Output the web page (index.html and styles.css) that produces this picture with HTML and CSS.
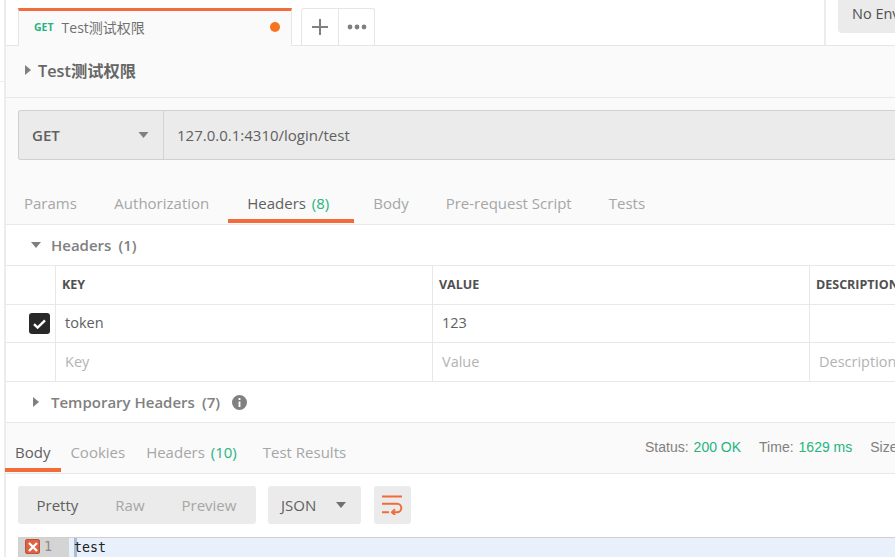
FILE: index.html
```html
<!DOCTYPE html>
<html lang="en">
<head>
    <meta charset="UTF-8">
    <meta name="viewport" content="width=device-width, initial-scale=1.0">
    <title>Test测试权限</title>
    <link rel="stylesheet" href="styles.css">
</head>
<body>
    <div class="sidebar-edge">
        <div class="edge-top"></div>
    </div>
    <div class="main">
        <div class="tab-bar">
            <div class="req-tab">
                <span class="req-tab-method">GET</span>
                <span class="req-tab-name">Test测试权限</span>
                <span class="dot"></span>
            </div>
            <div class="tab-actions">
                <div class="tab-action plus">
                    <svg viewBox="0 0 16 16" width="16" height="16"><path d="M7 0h2v7h7v2H9v7H7V9H0V7h7z"/></svg>
                </div>
                <div class="tab-action more">
                    <svg viewBox="0 0 20 6" width="20" height="6"><circle cx="3" cy="3" r="2.4"/><circle cx="10" cy="3" r="2.4"/><circle cx="17" cy="3" r="2.4"/></svg>
                </div>
            </div>
            <div class="env">
                <div class="env-select">No Environment</div>
            </div>
        </div>

        <div class="name-row">
            <svg class="caret" viewBox="0 0 6 10" width="6" height="10"><path d="M0 0l6 5-6 5z"/></svg>
            <span>Test测试权限</span>
        </div>

        <div class="url-row">
            <div class="url-box">
                <div class="method">
                    <span>GET</span>
                    <svg viewBox="0 0 10 6" width="11" height="6"><path d="M0 0h10L5 6z"/></svg>
                </div>
                <div class="url">127.0.0.1:4310/login/test</div>
            </div>
        </div>

        <div class="req-tabs">
            <div class="tab">Params</div>
            <div class="tab">Authorization</div>
            <div class="tab active">Headers <span class="count">(8)</span></div>
            <div class="tab">Body</div>
            <div class="tab">Pre-request Script</div>
            <div class="tab">Tests</div>
        </div>

        <div class="section-head open">
            <svg viewBox="0 0 10 6" width="10" height="6"><path d="M0 0h10L5 6z"/></svg>
            <span>Headers</span><span class="section-count">(1)</span>
        </div>

        <div class="kv-row kv-head">
            <div class="cell"></div>
            <div class="cell">KEY</div>
            <div class="cell">VALUE</div>
            <div class="cell">DESCRIPTION</div>
        </div>
        <div class="kv-row token-row">
            <div class="cell check-cell">
                <span class="check">
                    <svg viewBox="0 0 13 10" width="13" height="10"><path d="M1 5.2l3.6 3.4L12 1.4" fill="none" stroke="#fff" stroke-width="2.4"/></svg>
                </span>
            </div>
            <div class="cell val">token</div>
            <div class="cell val">123</div>
            <div class="cell val"></div>
        </div>
        <div class="kv-row">
            <div class="cell"></div>
            <div class="cell val hint">Key</div>
            <div class="cell val hint">Value</div>
            <div class="cell val hint">Description</div>
        </div>

        <div class="section-head temp">
            <svg viewBox="0 0 6 10" width="6" height="10"><path d="M0 0l6 5-6 5z"/></svg>
            <span>Temporary Headers</span><span class="section-count">(7)</span>
            <svg class="info" viewBox="0 0 16 16" width="15" height="15"><path fill-rule="evenodd" d="M8 0a8 8 0 1 1 0 16A8 8 0 0 1 8 0zM7 3.2v2.2h2V3.2zM7 7v5.8h2V7z"/></svg>
        </div>

        <div class="res-bar">
            <div class="tab active">Body</div>
            <div class="tab">Cookies</div>
            <div class="tab">Headers <span class="count">(10)</span></div>
            <div class="tab">Test Results</div>
            <div class="status">
                <span>Status:</span><span class="ok">200 OK</span>
                <span class="stat-next">Time:</span><span class="ok">1629 ms</span>
                <span class="stat-next">Size:</span>
            </div>
        </div>

        <div class="res-tools">
            <div class="btn-group">
                <span class="on">Pretty</span>
                <span>Raw</span>
                <span>Preview</span>
            </div>
            <div class="lang">
                <span>JSON</span>
                <svg viewBox="0 0 10 6" width="10" height="6"><path d="M0 0h10L5 6z"/></svg>
            </div>
            <div class="wrap">
                <svg viewBox="0 0 21 20" width="21" height="20" fill="none" stroke="#f26b3a" stroke-width="2">
                    <path d="M0 1.5h20M0 8.7h15a4.3 4.3 0 0 1 0 8.6h-5M0 17.3h7"/>
                    <path d="M13 14.3l-3 3 3 2.7"/>
                </svg>
            </div>
        </div>

        <div class="editor">
            <div class="gutter">
                <span class="err">
                    <svg viewBox="0 0 10 10" width="10" height="10"><path d="M1 1l8 8M9 1l-8 8" stroke="#fff" stroke-width="2.4"/></svg>
                </span>
                <span class="line-no">1</span>
            </div>
            <div class="code"><span class="cursor"></span>test</div>
        </div>
    </div>
</body>
</html>
```

FILE: styles.css
```css
* {
    box-sizing: border-box;
}
html, body {
    margin: 0;
    height: 557px;
    overflow: hidden;
}
body {
    display: flex;
    width: 895px;
    background-color: #fff;
    font-family: "Open Sans", "Noto Sans CJK SC", sans-serif;
    font-size: 14.5px;
    color: #505050;
}
.sidebar-edge {
    width: 6px;
    flex: none;
    background-color: #fff;
    border-right: 2px solid #ececec;
}
.edge-top {
    height: 82px;
    border-bottom: 1px solid #ececec;
}
.main {
    flex: 1;
    min-width: 0;
    display: flex;
    flex-direction: column;
}

/* top tabs */
.tab-bar {
    height: 46px;
    flex: none;
    display: flex;
    padding-top: 8px;
    padding-left: 12px;
    border-bottom: 1px solid #e6e6e6;
}
.req-tab {
    width: 274px;
    height: 38px;
    margin-bottom: -1px;
    display: flex;
    align-items: center;
    padding: 0 11px 4px 15px;
    background-color: #fafafa;
    border-top: 3px solid #f26b3a;
    border-left: 1px solid #e6e6e6;
    border-right: 1px solid #e6e6e6;
}
.req-tab-method {
    font-size: 10.5px;
    font-weight: 700;
    color: #26b47f;
    margin-right: 8px;
}
.req-tab-name {
    font-size: 14px;
    color: #707070;
    flex: 1;
}
.dot {
    width: 10px;
    height: 10px;
    border-radius: 50%;
    background-color: #f7731e;
}
.tab-actions {
    display: flex;
    margin-left: 9px;
    height: 37px;
    border: 1px solid #e6e6e6;
    border-bottom: none;
    border-radius: 3px 3px 0 0;
}
.tab-action {
    display: flex;
    align-items: center;
    justify-content: center;
    fill: #808080;
}
.plus {
    width: 37px;
    border-right: 1px solid #e6e6e6;
}
.more {
    width: 35px;
}
.env {
    margin-left: 449px;
    margin-top: -8px;
    padding-left: 12px;
    border-left: 2px solid #ececec;
    flex: 1;
    min-width: 0;
    overflow: hidden;
}
.env-select {
    height: 33px;
    width: 200px;
    padding: 4px 0 0 14px;
    background-color: #ebebeb;
    border-radius: 0 0 4px 4px;
    white-space: nowrap;
}

/* request name and url */
.name-row {
    height: 52px;
    flex: none;
    display: flex;
    align-items: center;
    gap: 7px;
    padding: 0 0 3px 19px;
    background-color: #fafafa;
    border-bottom: 1px solid #e8e8e8;
    font-size: 16.3px;
    font-weight: 600;
    color: #666;
}
.caret {
    fill: #808080;
}
.url-row {
    height: 82px;
    flex: none;
    padding: 12px 0 0 12px;
    background-color: #fafafa;
}
.url-box {
    height: 50px;
    margin-right: -2px;
    display: flex;
    background-color: #ebebeb;
    border: 1px solid #d0d0d0;
    border-right: none;
    border-radius: 3px 0 0 3px;
}
.method {
    width: 145px;
    display: flex;
    align-items: center;
    justify-content: space-between;
    padding: 0 14px 0 13px;
    border-right: 1px solid #d4d4d4;
    font-size: 15px;
    font-weight: 600;
    color: #606060;
    fill: #808080;
}
.url {
    padding-left: 13px;
    align-self: center;
    font-size: 15px;
    color: #606060;
}

/* request tabs */
.req-tabs {
    height: 45px;
    flex: none;
    display: flex;
    align-items: flex-start;
    background-color: #fafafa;
    border-bottom: 1px solid #e8e8e8;
}
.tab {
    height: 43px;
    padding: 13px 18.5px 0;
    font-size: 15px;
    color: #a6a6a6;
    white-space: nowrap;
    border-bottom: 4px solid transparent;
}
.tab.active {
    color: #606060;
    border-bottom-color: #f26b3a;
}
.req-tabs .tab:first-child {
    padding: 13px 19px 0 18px;
}
.req-tabs .tab.active {
    padding: 13px 17.5px 0 19.5px;
}
.req-tabs .tab.active + .tab {
    padding-left: 19.5px;
}
.count {
    margin-left: 2px;
    margin-right: 7px;
    color: #26b47f;
}
.section-head {
    display: flex;
    align-items: center;
    flex: none;
    font-size: 15px;
    font-weight: 600;
    color: #808080;
}
.section-head.open {
    height: 40px;
    padding-left: 25px;
}
.section-head.open svg {
    margin-right: 10px;
}
.section-count {
    margin-left: 7px;
}
.section-head.temp {
    height: 41px;
    padding-left: 27px;
    border-top: 1px solid #e8e8e8;
}
.section-head.temp svg {
    margin-right: 12px;
}
.section-head svg {
    fill: #808080;
}
.section-head .info {
    margin-left: 12px;
}

/* headers table */
.kv-row {
    display: grid;
    grid-template-columns: 50px 377px 377px 1fr;
    height: 39px;
    flex: none;
    border-top: 1px solid #e8e8e8;
}
.token-row {
    height: 38px;
}
.cell {
    display: flex;
    align-items: center;
    padding: 0 0 2px 6px;
    white-space: nowrap;
    overflow: hidden;
    border-right: 1px solid #e8e8e8;
}
.cell:last-child {
    border-right: none;
}
.kv-head .cell {
    font-size: 12.5px;
    font-weight: 700;
    color: #505050;
}
.val {
    padding-left: 9px;
    color: #606060;
}
.cell.hint {
    color: #b3b3b3;
}
.check-cell {
    padding: 0 0 0 23px;
}
.check {
    width: 21px;
    height: 21px;
    display: flex;
    align-items: center;
    justify-content: center;
    background-color: #282828;
    border-radius: 3px;
}

/* response */
.res-bar {
    height: 52px;
    flex: none;
    display: flex;
    align-items: flex-start;
    background-color: #fafafa;
    border-top: 1px solid #e8e8e8;
    border-bottom: 1px solid #e8e8e8;
}
.res-bar .tab {
    height: 49px;
    padding: 19px 10px 0;
}
.res-bar .tab:first-child {
    margin-left: -1px;
    padding-right: 11px;
}
.res-bar .tab:nth-child(2) {
    padding: 19px 11px 0 9px;
}
.res-bar .count {
    margin-right: 6px;
}
.status {
    margin-left: auto;
    padding: 16px 0 0 0;
    width: 250px;
    display: flex;
    gap: 5px;
    font-family: "Liberation Sans", sans-serif;
    font-size: 14px;
    color: #808080;
    white-space: nowrap;
    overflow: hidden;
}
.ok {
    color: #26b47f;
}
.stat-next {
    margin-left: 13px;
}
.res-tools {
    height: 63px;
    flex: none;
    display: flex;
    gap: 12px;
    padding: 12px 0 0 12px;
    background-color: #fff;
    font-size: 15px;
}
.btn-group, .lang, .wrap {
    height: 38px;
    display: flex;
    align-items: center;
    background-color: #ebebeb;
    border-radius: 3px;
}
.btn-group {
    width: 238px;
    padding-left: 18.5px;
    gap: 37px;
    color: #a6a6a6;
}
.btn-group .on {
    color: #606060;
}
.lang {
    width: 93px;
    padding: 0 15px 0 13px;
    justify-content: space-between;
    color: #606060;
    fill: #707070;
}
.wrap {
    width: 37px;
    margin-left: 1px;
    justify-content: center;
}

/* editor */
.editor {
    flex: 1;
    margin-left: 12px;
    display: flex;
    background-color: #e8f0fb;
    border-top: 1px solid #d0d0d0;
    border-left: 1px solid #d0d0d0;
}
.gutter {
    width: 50px;
    display: flex;
    align-items: flex-start;
    padding: 1px 0 0 6px;
    background-color: #d4d4d4;
}
.err {
    width: 15px;
    height: 15px;
    display: flex;
    align-items: center;
    justify-content: center;
    background-color: #e0603f;
    border: 1px solid #b5533c;
    border-radius: 2px;
}
.line-no {
    margin-left: 4px;
    font-family: "DejaVu Sans Mono", monospace;
    font-size: 13.3px;
    color: #8a8a8a;
}
.code {
    padding-left: 5px;
    display: flex;
    font-family: "DejaVu Sans Mono", monospace;
    font-size: 13.3px;
    color: #222;
    line-height: 19px;
}
.cursor {
    width: 3px;
    height: 19px;
    margin-right: -3px;
    background-color: #a9bdd6;
}
```
